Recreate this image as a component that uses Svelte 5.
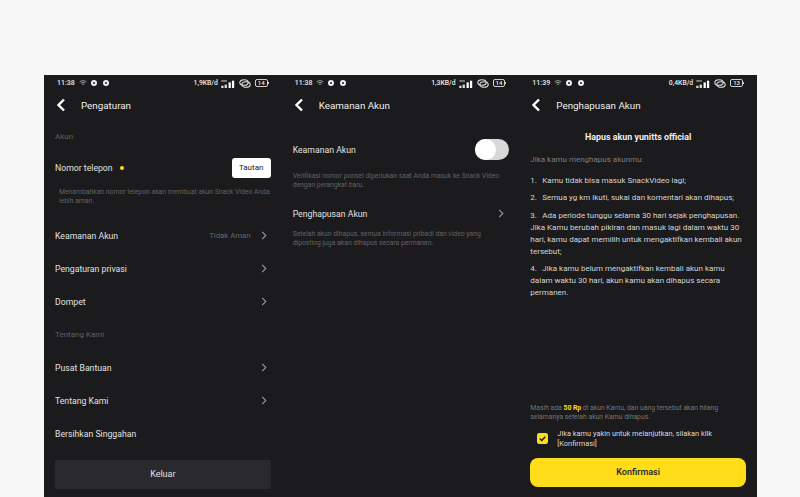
<script>
  const settings = [
    { label: 'Keamanan Akun', value: 'Tidak Aman', arrow: true },
    { label: 'Pengaturan privasi', arrow: true },
    { label: 'Dompet', arrow: true },
    { label: 'Tentang Kami', section: true },
    { label: 'Pusat Bantuan', arrow: true },
    { label: 'Tentang Kami', arrow: true },
    { label: 'Bersihkan Singgahan' }
  ];

  const screens = [
    { time: '11:38', speed: '1,9KB/d', battery: '14' },
    { time: '11:38', speed: '1,3KB/d', battery: '14' },
    { time: '11:39', speed: '0,4KB/d', battery: '13' }
  ];
</script>

{#snippet statusBar(s)}
  <div class="status">
    <span>{s.time}</span>
    <svg class="wifi" viewBox="0 0 10 8" width="8" height="6">
      <path d="M0.5 2.5C3 0.3 7 0.3 9.5 2.5M2 4.2C3.7 2.8 6.3 2.8 8 4.2M3.5 5.8C4.4 5.2 5.6 5.2 6.5 5.8" fill="none" stroke="#a8a8a8" stroke-width="1.200" />
    </svg>
    <i class="ring"></i>
    <i class="ring"></i>
    <span class="grow"></span>
    <span class="speed">{s.speed}</span>
    <svg viewBox="0 0 12 8" width="14" height="9">
      <rect x="0" y="6" width="2" height="2" fill="#ddd" />
      <rect x="3" y="5" width="2" height="3" fill="#ddd" />
      <rect x="6.5" y="3" width="2" height="5" fill="#fff" />
      <rect x="9.500" y="1.500" width="2" height="6.500" fill="#fff" />
      <rect x="0" y="1" width="5" height="1.500" fill="#888" />
    </svg>
    <svg viewBox="0 0 12 9" width="12" height="9">
      <ellipse cx="5" cy="3.500" rx="4.200" ry="2.800" fill="none" stroke="#ddd" stroke-width="1.100" />
      <ellipse cx="7" cy="5.500" rx="4.200" ry="2.800" fill="none" stroke="#ddd" stroke-width="1.100" />
    </svg>
    <span class="battery">{s.battery}</span>
  </div>
{/snippet}

{#snippet header(title)}
  <div class="header">
    <svg viewBox="0 0 10 14" width="10" height="14">
      <path d="M8 1.500L2.500 7L8 12.500" fill="none" stroke="#fff" stroke-width="2.400" />
    </svg>
    <span>{title}</span>
  </div>
{/snippet}

{#snippet chevron()}
  <svg class="chevron" viewBox="0 0 6 10" width="6" height="9">
    <path d="M1 1L5 5L1 9" fill="none" stroke="#9a9a9a" stroke-width="1.200" />
  </svg>
{/snippet}

<main>
  <section class="phone">
    {@render statusBar(screens[0])}
    {@render header('Pengaturan')}
    <div class="list">
      <div class="row section akun">Akun</div>
      <div class="row phone-row">
        <span>Nomor telepon</span>
        <i class="dot"></i>
        <span class="grow"></span>
        <span class="link">Tautan</span>
      </div>
      <p class="note first">Menambahkan nomor telepon akan membuat akun Snack Video Anda lebih aman.</p>
      {#each settings as item}
        <div class="row" class:section={item.section}>
          <span class="grow">{item.label}</span>
          {#if item.value}<span class="value">{item.value}</span>{/if}
          {#if item.arrow}{@render chevron()}{/if}
        </div>
      {/each}
    </div>
    <div class="logout">Keluar</div>
  </section>

  <section class="phone">
    {@render statusBar(screens[1])}
    {@render header('Keamanan Akun')}
    <div class="list security">
      <div class="row">
        <span class="grow">Keamanan Akun</span>
        <span class="toggle"><i></i></span>
      </div>
      <p class="note verify">Verifikasi nomor ponsel diperlukan saat Anda masuk ke Snack Video dengan perangkat baru.</p>
      <div class="row delete">
        <span class="grow">Penghapusan Akun</span>
        {@render chevron()}
      </div>
      <p class="note">Setelah akun dihapus, semua informasi pribadi dan video yang diposting juga akan dihapus secara permanen.</p>
    </div>
  </section>

  <section class="phone">
    {@render statusBar(screens[2])}
    {@render header('Penghapusan Akun')}
    <div class="terms">
      <h2>Hapus akun yunitts official</h2>
      <p class="intro">Jika kamu menghapus akunmu:</p>
      <p><span class="num">1.</span>Kamu tidak bisa masuk SnackVideo lagi;</p>
      <p><span class="num">2.</span>Semua yg km ikuti, sukai dan komentari akan dihapus;</p>
      <p><span class="num">3.</span>Ada periode tunggu selama 30 hari sejak penghapusan. Jika Kamu berubah pikiran dan masuk lagi dalam waktu 30 hari, kamu dapat memilih untuk mengaktifkan kembali akun tersebut;</p>
      <p><span class="num">4.</span>Jika kamu belum mengaktifkan kembali akun kamu dalam waktu 30 hari, akun kamu akan dihapus secara permanen.</p>
    </div>
    <div class="confirm">
      <p class="note balance">Masih ada <b>50 Rp</b> di akun Kamu, dan uang tersebut akan hilang selamanya setelah akun Kamu dihapus.</p>
      <div class="check">
        <svg viewBox="0 0 12 12" width="11" height="11">
          <rect width="12" height="12" rx="2.500" fill="#ffdd19" />
          <path d="M3 6L5.200 8.200L9 4" fill="none" stroke="#1a1a1a" stroke-width="1.600" />
        </svg>
        <span>Jika kamu yakin untuk melanjutkan, silakan klik [Konfirmasi]</span>
      </div>
      <div class="button">Konfirmasi</div>
    </div>
  </section>
</main>

<style>
  :global(body) {
    margin: 0;
    background: #f7f7f7;
  }

  main {
    display: flex;
    height: 422px;
    margin-top: 75px;
    margin-left: 44px;
    width: 713px;
    overflow: hidden;
    font-family: Roboto, "Liberation Sans", sans-serif;
    color: #e0e0e0;
    font-size: 8.700px;
  }

  .phone {
    flex: 1;
    min-width: 0;
    background: #1b1b1d;
    padding: 0 11px;
    display: flex;
    flex-direction: column;
  }

  .status {
    flex: none;
    height: 16px;
    display: flex;
    align-items: center;
    gap: 4px;
    font-size: 7px;
    font-weight: 500;
    color: #e8e8e8;
    margin: 0 2px;
  }

  .speed { font-size: 6.800px; margin-right: -1px; }

  .ring {
    width: 2px;
    height: 2px;
    border: 2px solid #f0f0f0;
    border-radius: 50%;
  }

  .ring + .ring { margin-left: 2px; }

  .grow { flex: 1; }

  .battery {
    position: relative;
    border: 1px solid #cfcfcf;
    border-radius: 2px;
    font-size: 6px;
    line-height: 6px;
    padding: 0 2px;
    margin-right: 1px;
  }

  .battery::after {
    content: "";
    position: absolute;
    right: -2px;
    top: 2px;
    width: 1px;
    height: 2px;
    background: #cfcfcf;
  }

  .header {
    flex: none;
    height: 28px;
    display: flex;
    align-items: center;
    gap: 15px;
    font-size: 9.800px;
    color: #eee;
    margin-left: 1px;
  }

  .row {
    height: 33px;
    display: flex;
    align-items: center;
    gap: 6px;
  }

  .section { color: #5f5f5f; font-size: 8px; }
  .akun { margin-top: 1px; }
  .phone-row { height: 30px; gap: 7px; }

  .dot {
    width: 4px;
    height: 4px;
    border-radius: 50%;
    background: #ffdd19;
  }

  .link {
    background: #fff;
    color: #222;
    font-size: 8px;
    width: 39px;
    height: 20px;
    line-height: 20px;
    text-align: center;
    border-radius: 3px;
  }

  .value { color: #666; font-size: 7.800px; margin-right: 4px; }
  .chevron { margin-right: 4px; }

  .note {
    margin: 0;
    font-size: 6.800px;
    line-height: 9px;
    color: #626262;
  }

  .note.first {
    box-sizing: border-box;
    height: 33px;
    padding: 5px 0 0 4px;
    margin-bottom: 3px;
  }

  .logout {
    flex: none;
    margin-top: 10px;
    height: 29px;
    line-height: 29px;
    text-align: center;
    font-size: 9px;
    background: #2a2a2c;
    border-radius: 2px;
  }

  .security { margin-top: 14px; }
  .security .verify { margin-top: 6px; }
  .delete { margin-top: 7px; }

  .toggle {
    width: 34px;
    height: 21px;
    border-radius: 11px;
    background: #d8d8d8;
    display: flex;
    margin-right: -1px;
  }

  .toggle i {
    width: 21px;
    height: 21px;
    border-radius: 50%;
    background: #fff;
  }

  .terms { flex: 1; }

  .terms h2 {
    margin: 13px 0 11px;
    font-size: 8.900px;
    font-weight: 700;
    text-align: center;
    color: #eee;
    line-height: 11px;
  }

  .terms p {
    margin: 0 0 5.500px;
    font-size: 8px;
    line-height: 12px;
    color: #d4d4d4;
  }

  .terms .intro { color: #7d7d7d; margin-bottom: 8.500px; }
  .num { display: inline-block; width: 12px; }

  .balance { color: #757575; }
  .balance b { color: #ffdd19; }

  .check {
    display: flex;
    align-items: flex-start;
    gap: 9px;
    margin: 7px 0 0 7px;
    font-size: 7.400px;
    line-height: 9.500px;
    color: #d8d8d8;
  }

  .check svg { flex: none; margin-top: 4px; }

  .button {
    margin: 10px 0;
    height: 29px;
    line-height: 29px;
    text-align: center;
    font-size: 9px;
    background: #ffdd19;
    color: #222;
    font-weight: 500;
    border-radius: 8px;
  }
</style>
